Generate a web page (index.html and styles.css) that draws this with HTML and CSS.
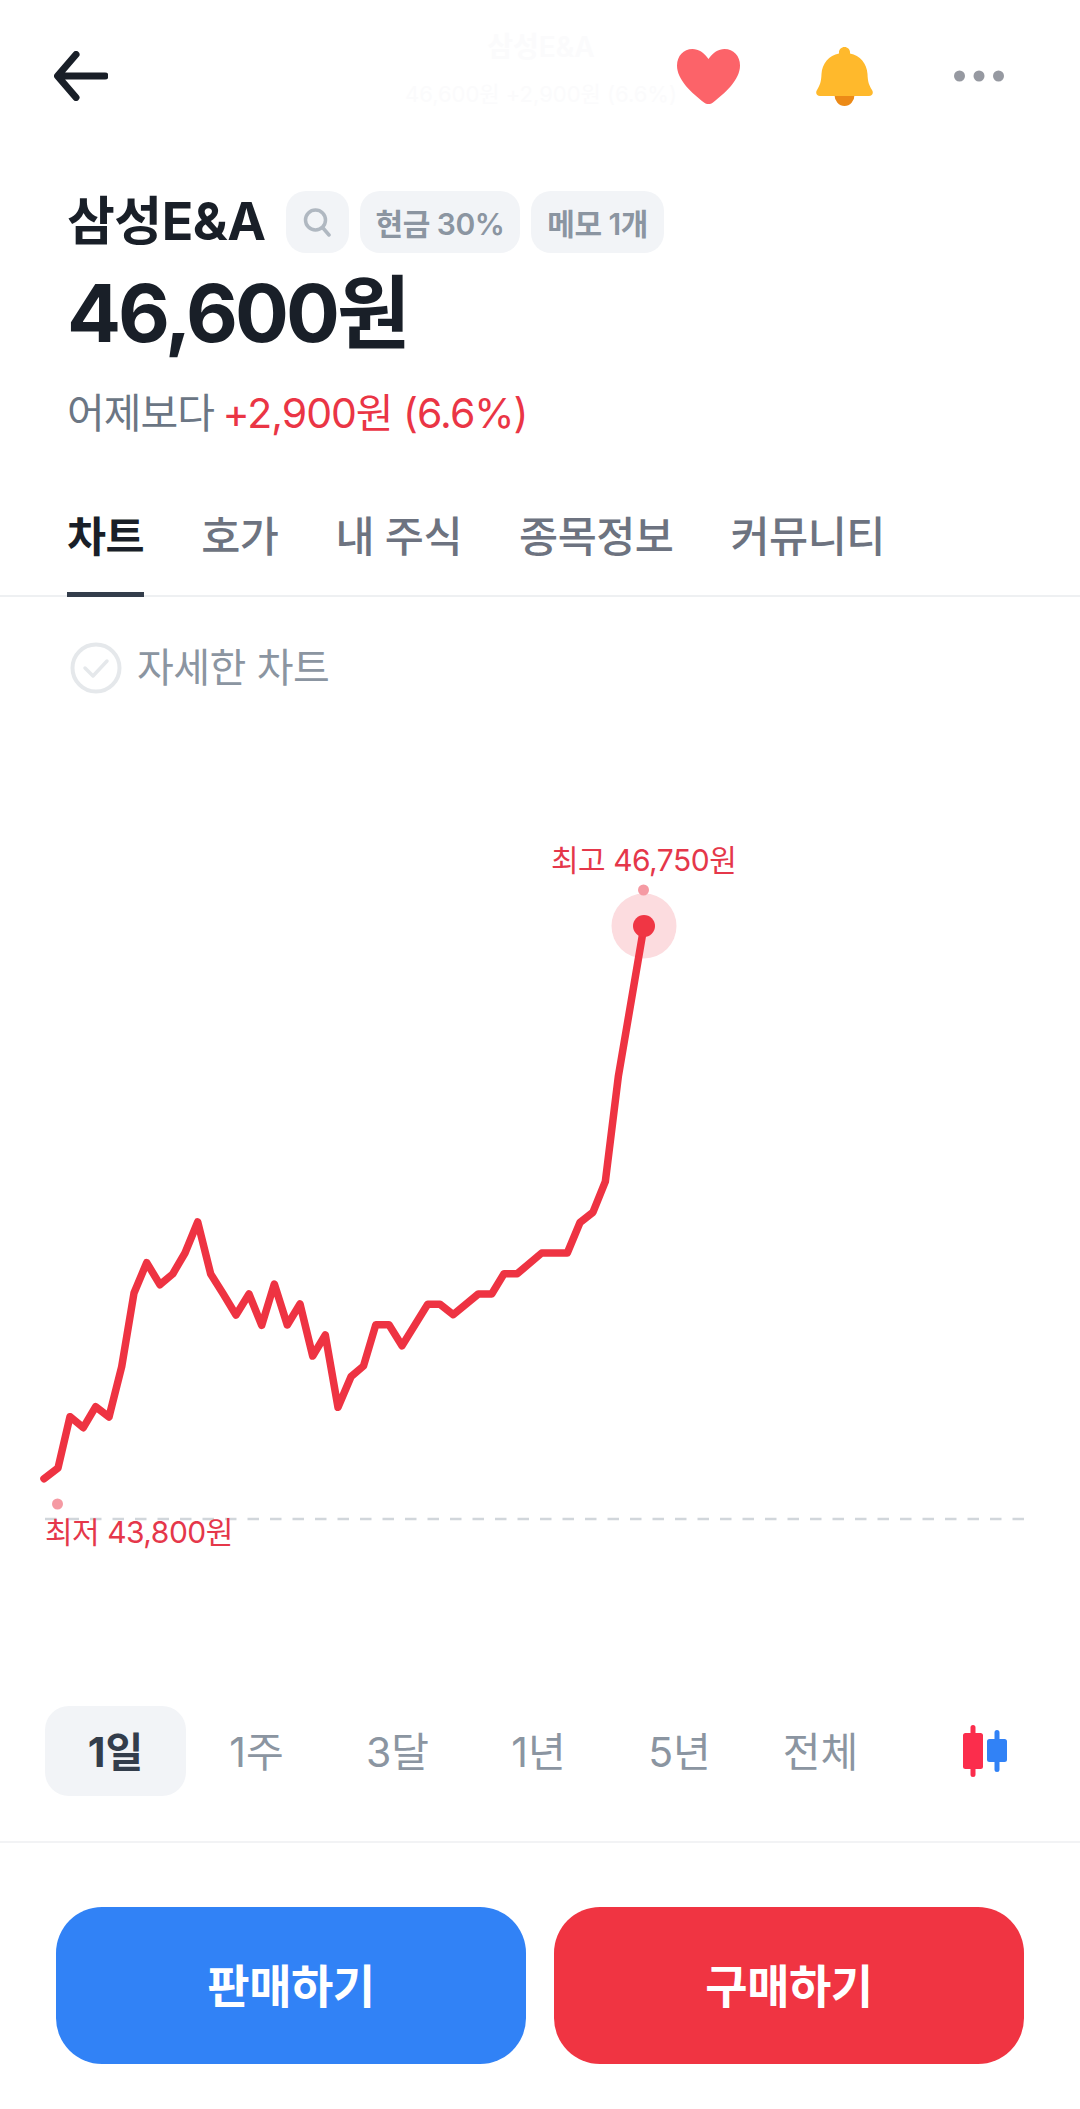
FILE: index.html
```html
<!DOCTYPE html>
<html lang="ko">
<head>
<meta charset="utf-8">
<title>삼성E&amp;A</title>
<link rel="stylesheet" href="styles.css">
</head>
<body>
<div class="page">
  <header class="topbar">
    <svg class="icon-back" width="54" height="50" viewBox="0 0 54 50"><path d="M22 3.5 3.5 25 22 46.5M4 25h47" fill="none" stroke="#191f28" stroke-width="7" stroke-linecap="round" stroke-linejoin="round"/></svg>
    <div class="ghost">
      <span class="ghost-name">삼성E&amp;A</span>
      <span class="ghost-price">46,600원 +2,900원 (6.6%)</span>
    </div>
    <svg class="icon-heart" width="63" height="55" viewBox="0 0 63 55"><path d="M31.5 10C27 3.5 21.5 0 15.5 0 6.5 0 0 7 0 16.5 0 31 15 44 27 53.5c2.800 2 6.200 2 9 0C48 44 63 31 63 16.500 63 7 56.500 0 47.500 0 41.500 0 36 3.500 31.500 10Z" fill="#fc6369"/></svg>
    <svg class="icon-bell" width="57" height="59" viewBox="0 0 57 59"><path d="M18.500 48a10 11 0 0 0 20 0Z" fill="#ec8a17"/><path d="M28.500 0C31.500 0 34 2.500 34 5v1.500C44 8.500 51 16.500 51.500 27c.3 8 1.500 11 4.500 16 2 3 0 6-3 6H4c-3 0-5-3-3-6 3-5 4.200-8 4.500-16C6 16.500 13 8.500 23 6.500V5c0-2.500 2.500-5 5.500-5Z" fill="#ffb92c"/></svg>
    <svg class="icon-more" width="50" height="12" viewBox="0 0 50 12"><circle cx="5.500" cy="6" r="5.500" fill="#9699a1"/><circle cx="25" cy="6" r="5.500" fill="#9699a1"/><circle cx="44.500" cy="6" r="5.500" fill="#9699a1"/></svg>
  </header>

  <section class="summary">
    <div class="title-row">
      <h1 class="name">삼성E&amp;A</h1>
      <span class="chip chip-icon"><svg width="30" height="30" viewBox="0 0 30 30"><circle cx="13.500" cy="13" r="10" fill="none" stroke="#b0b8c1" stroke-width="3.500"/><path d="M21 21l6 7" stroke="#b0b8c1" stroke-width="3.500" stroke-linecap="round"/></svg></span>
      <span class="chip">현금 30%</span>
      <span class="chip">메모 1개</span>
    </div>
    <div class="price">46,600원</div>
    <div class="change"><span class="change-label">어제보다</span> <span class="change-value">+2,900원 (6.6%)</span></div>
  </section>

  <nav class="tabs">
    <span class="tab tab-active">차트</span>
    <span class="tab">호가</span>
    <span class="tab">내 주식</span>
    <span class="tab">종목정보</span>
    <span class="tab">커뮤니티</span>
  </nav>

  <div class="detail-toggle">
    <svg width="52" height="52" viewBox="0 0 52 52"><circle cx="26" cy="26" r="23.500" fill="none" stroke="#e5e8eb" stroke-width="4"/><path d="M15 26l8 8 14-15" fill="none" stroke="#e5e8eb" stroke-width="3.500" stroke-linecap="round" stroke-linejoin="round"/></svg>
    <span>자세한 차트</span>
  </div>

  <div class="chart">
    <svg class="chart-svg" width="1080" height="966" viewBox="0 740 1080 966">
      <path d="M45 1519H1025" fill="none" stroke="#d1d6db" stroke-width="2.500" stroke-dasharray="11.500 11"/>
      <circle cx="644" cy="926" r="32.500" fill="#fcdcdf"/>
      <circle cx="643.500" cy="890" r="5.500" fill="#f59aa3"/>
      <circle cx="57.500" cy="1504" r="5.500" fill="#f59aa3"/>
      <polyline fill="none" stroke="#ee3342" stroke-width="7.500" stroke-linejoin="round" stroke-linecap="round" points="44,1478.700 58,1468 70,1416.700 83.300,1427.700 95.700,1406.700 109,1417 121.700,1366.700 134,1293 146.700,1262.700 160,1284.700 172.700,1274 185,1253 197.700,1222 210.700,1274 223.300,1294 236,1315 249,1294 261.700,1325.300 274.300,1284 287.300,1325 300,1304 312.700,1356 325.300,1335 338,1407.300 351,1376.700 363.500,1366 375.800,1324.700 389,1324.700 402,1345.700 427.700,1304.300 440,1304.300 453.300,1314.700 478.300,1294 491.700,1294 504,1273.700 517.300,1273.700 541.700,1253 567.300,1253 580,1222.500 593,1212.200 605.300,1181.700 618.300,1076.700 644,926"/>
      <circle cx="644" cy="926" r="11" fill="#f03644"/>
    </svg>
    <span class="chart-label label-high">최고 46,750원</span>
    <span class="chart-label label-low">최저 43,800원</span>
  </div>

  <div class="ranges">
    <span class="range range-active">1일</span>
    <span class="range">1주</span>
    <span class="range">3달</span>
    <span class="range">1년</span>
    <span class="range">5년</span>
    <span class="range">전체</span>
    <svg class="icon-candle" width="44" height="52" viewBox="0 0 44 52"><path d="M10 0a2.500 2.500 0 0 1 2.500 2.500V8h5a2.500 2.500 0 0 1 2.500 2.500v31a2.500 2.500 0 0 1-2.500 2.500h-5v5.500a2.500 2.500 0 0 1-5 0V44h-5A2.500 2.500 0 0 1 0 41.500v-31A2.500 2.500 0 0 1 2.500 8h5V2.500A2.500 2.500 0 0 1 10 0Z" fill="#fb2d4c"/><path d="M34 5a2.500 2.500 0 0 1 2.500 2.500V14h5a2.500 2.500 0 0 1 2.500 2.500v18a2.500 2.500 0 0 1-2.500 2.500h-5v7.500a2.500 2.500 0 0 1-5 0V37h-5a2.500 2.500 0 0 1-2.500-2.500v-18a2.500 2.500 0 0 1 2.500-2.500h5V7.500A2.500 2.500 0 0 1 34 5Z" fill="#3182f6"/></svg>
  </div>

  <div class="actions">
    <button class="action action-sell">판매하기</button>
    <button class="action action-buy">구매하기</button>
  </div>
</div>
</body>
</html>
```

FILE: styles.css
```css
* { box-sizing: border-box; }
html, body { margin: 0; padding: 0; background: #fff; }
body { font-family: Inter, "Noto Sans CJK KR", sans-serif; color: #191f28; }
.page { width: 1080px; height: 2109px; overflow: hidden; }

.topbar { position: relative; height: 152px; display: flex; align-items: center; padding-left: 54px; }
.icon-back { flex: none; margin-right: 569px; }
.icon-heart { flex: none; margin-right: 76px; position: relative; }
.icon-bell { flex: none; margin-right: 81px; }
.icon-more { flex: none; }
.ghost { position: absolute; left: 406px; top: 30px; width: 270px; display: flex; flex-direction: column; align-items: center; color: #fbfbfc; }
.ghost-name { font-size: 28px; line-height: 34px; font-weight: 600; }
.ghost-price { font-size: 22px; line-height: 36px; margin-top: 12px; white-space: nowrap; }

.summary { padding-left: 67px; }
.title-row { margin-top: 39px; display: flex; align-items: center; height: 62px; }
.name { margin: 0 20px 0 0; font-size: 52px; line-height: 62px; font-weight: 700; letter-spacing: -.5px; white-space: nowrap; }
.chip { height: 62px; padding: 0 16px; margin-right: 11px; border-radius: 20px; background: #f2f4f7; color: #8b95a1; font-size: 30px; font-weight: 600; display: flex; align-items: center; letter-spacing: -.5px; white-space: nowrap; }
.chip-icon { width: 63px; padding: 0; justify-content: center; }
.price { margin-top: 10px; font-size: 80px; line-height: 100px; font-weight: 700; letter-spacing: -3px; }
.change { margin-top: 24px; font-size: 41px; line-height: 52px; letter-spacing: -1px; }
.change-label { color: #6b7684; }
.change-value { color: #ea3545; margin-left: -2px; }

.tabs { margin-top: 69px; height: 89px; display: flex; gap: 57px; padding-left: 67px; border-bottom: 2px solid #eef0f2; }
.tab { height: 89px; font-size: 42.500px; line-height: 58px; font-weight: 500; color: #6d7380; letter-spacing: -.5px; white-space: nowrap; }
.tab-active { color: #191f28; font-weight: 700; border-bottom: 5px solid #333d4b; }

.detail-toggle { display: flex; align-items: flex-start; gap: 15px; height: 143px; padding: 45px 0 0 70px; font-size: 40px; line-height: 52px; color: #8b95a1; letter-spacing: -.5px; }

.chart { position: relative; height: 966px; }
.chart-svg { display: block; }
.chart-label { position: absolute; font-size: 30px; line-height: 40px; color: #e5374a; white-space: nowrap; letter-spacing: -.5px; }
.label-high { left: 551px; top: 100px; }
.label-low { left: 45px; top: 772px; }

.ranges { display: flex; align-items: center; height: 90px; padding-left: 45px; }
.range { width: 141px; height: 90px; padding-bottom: 4px; display: flex; align-items: center; justify-content: center; font-size: 41px; color: #8b95a1; border-radius: 24px; }
.range-active { background: #f2f4f7; color: #333d4b; font-weight: 700; }
.icon-candle { flex: none; margin-left: 72px; }

.actions { margin-top: 45px; padding: 64px 56px 0; height: 223px; display: flex; gap: 28px; border-top: 2px solid #f2f3f5; }
.action { flex: 1; height: 157px; padding: 0 0 6px; border: 0; border-radius: 46px; color: #fff; font-family: inherit; font-size: 46px; font-weight: 700; letter-spacing: -.5px; }
.action-sell { background: #3182f6; }
.action-buy { background: #f03442; }
```
